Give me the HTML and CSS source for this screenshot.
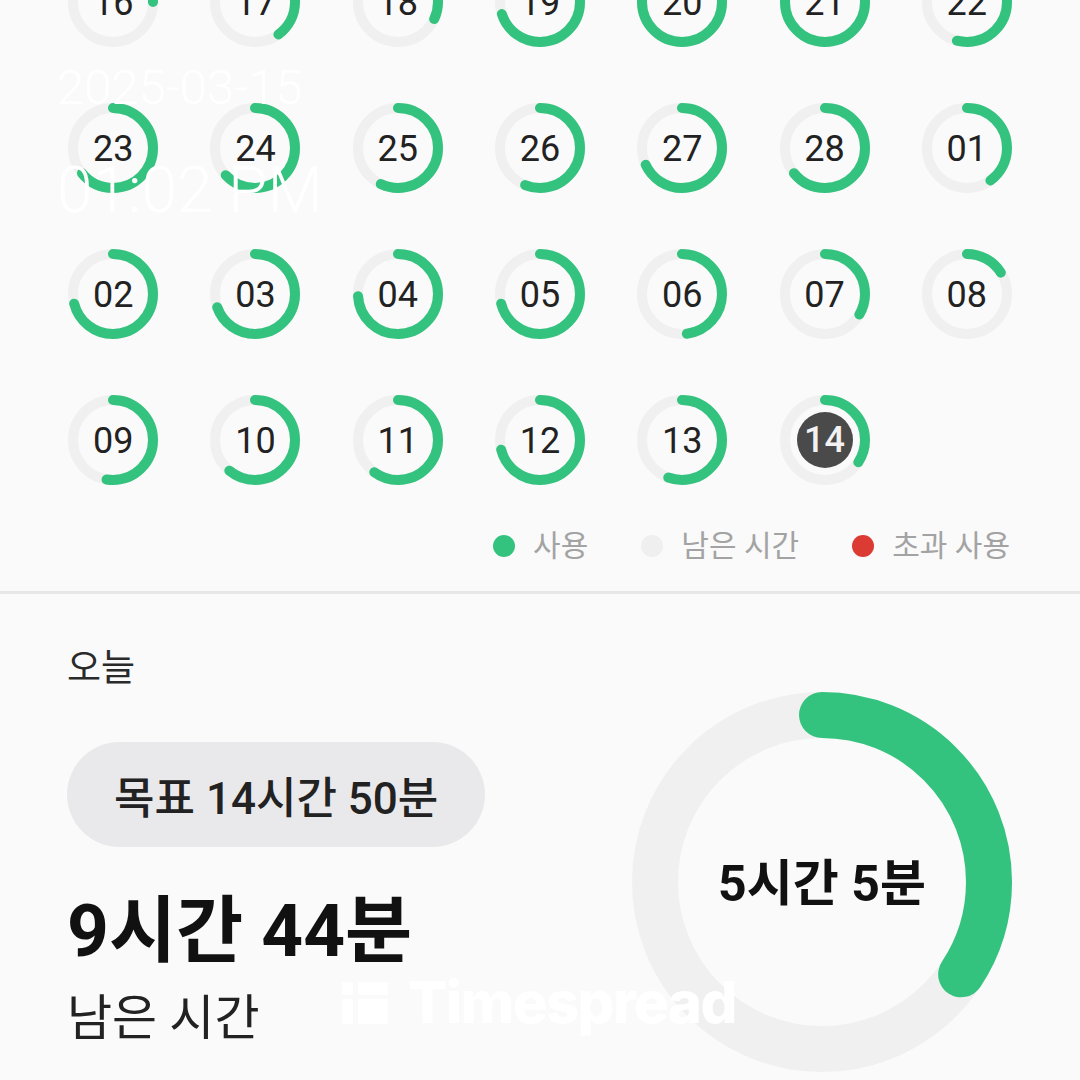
FILE: index.html
```html
<!DOCTYPE html>
<html lang="ko">
<head>
<meta charset="utf-8">
<title>Timespread</title>
<link rel="stylesheet" href="styles.css">
</head>
<body>
<main class="screen">
  <section class="calendar">
    <div class="day"><svg class="ring" viewBox="0 0 90 90"><circle class="track" cx="45" cy="45" r="40"/><circle class="used" cx="45" cy="45" r="40" stroke-dasharray="62.8 1000"/></svg><span class="num">16</span></div>
    <div class="day"><svg class="ring" viewBox="0 0 90 90"><circle class="track" cx="45" cy="45" r="40"/><circle class="used" cx="45" cy="45" r="40" stroke-dasharray="100.5 1000"/></svg><span class="num">17</span></div>
    <div class="day"><svg class="ring" viewBox="0 0 90 90"><circle class="track" cx="45" cy="45" r="40"/><circle class="used" cx="45" cy="45" r="40" stroke-dasharray="80.4 1000"/></svg><span class="num">18</span></div>
    <div class="day"><svg class="ring" viewBox="0 0 90 90"><circle class="track" cx="45" cy="45" r="40"/><circle class="used" cx="45" cy="45" r="40" stroke-dasharray="175.9 1000"/></svg><span class="num">19</span></div>
    <div class="day"><svg class="ring" viewBox="0 0 90 90"><circle class="track" cx="45" cy="45" r="40"/><circle class="used" cx="45" cy="45" r="40" stroke-dasharray="221.2 1000"/></svg><span class="num">20</span></div>
    <div class="day"><svg class="ring" viewBox="0 0 90 90"><circle class="track" cx="45" cy="45" r="40"/><circle class="used" cx="45" cy="45" r="40" stroke-dasharray="221.2 1000"/></svg><span class="num">21</span></div>
    <div class="day"><svg class="ring" viewBox="0 0 90 90"><circle class="track" cx="45" cy="45" r="40"/><circle class="used" cx="45" cy="45" r="40" stroke-dasharray="135.7 1000"/></svg><span class="num">22</span></div>

    <div class="day"><svg class="ring" viewBox="0 0 90 90"><circle class="track" cx="45" cy="45" r="40"/><circle class="used" cx="45" cy="45" r="40" stroke-dasharray="160.9 1000"/></svg><span class="num">23</span></div>
    <div class="day"><svg class="ring" viewBox="0 0 90 90"><circle class="track" cx="45" cy="45" r="40"/><circle class="used" cx="45" cy="45" r="40" stroke-dasharray="158.3 1000"/></svg><span class="num">24</span></div>
    <div class="day"><svg class="ring" viewBox="0 0 90 90"><circle class="track" cx="45" cy="45" r="40"/><circle class="used" cx="45" cy="45" r="40" stroke-dasharray="143.3 1000"/></svg><span class="num">25</span></div>
    <div class="day"><svg class="ring" viewBox="0 0 90 90"><circle class="track" cx="45" cy="45" r="40"/><circle class="used" cx="45" cy="45" r="40" stroke-dasharray="140.7 1000"/></svg><span class="num">26</span></div>
    <div class="day"><svg class="ring" viewBox="0 0 90 90"><circle class="track" cx="45" cy="45" r="40"/><circle class="used" cx="45" cy="45" r="40" stroke-dasharray="170.9 1000"/></svg><span class="num">27</span></div>
    <div class="day"><svg class="ring" viewBox="0 0 90 90"><circle class="track" cx="45" cy="45" r="40"/><circle class="used" cx="45" cy="45" r="40" stroke-dasharray="160.9 1000"/></svg><span class="num">28</span></div>
    <div class="day"><svg class="ring" viewBox="0 0 90 90"><circle class="track" cx="45" cy="45" r="40"/><circle class="used" cx="45" cy="45" r="40" stroke-dasharray="100.5 1000"/></svg><span class="num">01</span></div>

    <div class="day"><svg class="ring" viewBox="0 0 90 90"><circle class="track" cx="45" cy="45" r="40"/><circle class="used" cx="45" cy="45" r="40" stroke-dasharray="178.4 1000"/></svg><span class="num">02</span></div>
    <div class="day"><svg class="ring" viewBox="0 0 90 90"><circle class="track" cx="45" cy="45" r="40"/><circle class="used" cx="45" cy="45" r="40" stroke-dasharray="174.7 1000"/></svg><span class="num">03</span></div>
    <div class="day"><svg class="ring" viewBox="0 0 90 90"><circle class="track" cx="45" cy="45" r="40"/><circle class="used" cx="45" cy="45" r="40" stroke-dasharray="186.0 1000"/></svg><span class="num">04</span></div>
    <div class="day"><svg class="ring" viewBox="0 0 90 90"><circle class="track" cx="45" cy="45" r="40"/><circle class="used" cx="45" cy="45" r="40" stroke-dasharray="178.4 1000"/></svg><span class="num">05</span></div>
    <div class="day"><svg class="ring" viewBox="0 0 90 90"><circle class="track" cx="45" cy="45" r="40"/><circle class="used" cx="45" cy="45" r="40" stroke-dasharray="120.6 1000"/></svg><span class="num">06</span></div>
    <div class="day"><svg class="ring" viewBox="0 0 90 90"><circle class="track" cx="45" cy="45" r="40"/><circle class="used" cx="45" cy="45" r="40" stroke-dasharray="84.2 1000"/></svg><span class="num">07</span></div>
    <div class="day"><svg class="ring" viewBox="0 0 90 90"><circle class="track" cx="45" cy="45" r="40"/><circle class="used" cx="45" cy="45" r="40" stroke-dasharray="40.2 1000"/></svg><span class="num">08</span></div>

    <div class="day"><svg class="ring" viewBox="0 0 90 90"><circle class="track" cx="45" cy="45" r="40"/><circle class="used" cx="45" cy="45" r="40" stroke-dasharray="132.0 1000"/></svg><span class="num">09</span></div>
    <div class="day"><svg class="ring" viewBox="0 0 90 90"><circle class="track" cx="45" cy="45" r="40"/><circle class="used" cx="45" cy="45" r="40" stroke-dasharray="153.3 1000"/></svg><span class="num">10</span></div>
    <div class="day"><svg class="ring" viewBox="0 0 90 90"><circle class="track" cx="45" cy="45" r="40"/><circle class="used" cx="45" cy="45" r="40" stroke-dasharray="150.8 1000"/></svg><span class="num">11</span></div>
    <div class="day"><svg class="ring" viewBox="0 0 90 90"><circle class="track" cx="45" cy="45" r="40"/><circle class="used" cx="45" cy="45" r="40" stroke-dasharray="178.4 1000"/></svg><span class="num">12</span></div>
    <div class="day"><svg class="ring" viewBox="0 0 90 90"><circle class="track" cx="45" cy="45" r="40"/><circle class="used" cx="45" cy="45" r="40" stroke-dasharray="139.5 1000"/></svg><span class="num">13</span></div>
    <div class="day"><svg class="ring" viewBox="0 0 90 90"><circle class="track" cx="45" cy="45" r="40"/><circle class="used" cx="45" cy="45" r="40" stroke-dasharray="86.2 1000"/></svg><span class="num num-today">14</span></div>
  </section>

  <ul class="legend">
    <li class="legend-item"><span class="dot dot-used"></span>사용</li>
    <li class="legend-item"><span class="dot dot-left"></span>남은 시간</li>
    <li class="legend-item"><span class="dot dot-over"></span>초과 사용</li>
  </ul>

  <div class="divider"></div>

  <section class="today">
    <div class="today-info">
      <div class="today-label">오늘</div>
      <div class="goal-pill">목표 14시간 50분</div>
      <div class="remain-value">9시간 44분</div>
      <div class="remain-label">남은 시간</div>
    </div>
    <div class="big-ring">
      <svg class="big-ring-svg" viewBox="0 0 380 380">
        <circle class="big-track" cx="190" cy="190" r="167"/>
        <circle class="big-used" cx="190" cy="190" r="167" stroke-dasharray="360 2000"/>
      </svg>
      <span class="big-ring-text">5시간 5분</span>
    </div>
  </section>

  <div class="stamp-date">2025-03-15</div>
  <div class="stamp-time">01:02 PM</div>
  <div class="brand">
    <svg class="brand-logo" viewBox="0 0 46 44">
      <rect x="0" y="2" width="11" height="13" rx="2"/>
      <rect x="0" y="19" width="11" height="25" rx="2"/>
      <rect x="16" y="2" width="30" height="13" rx="2"/>
      <rect x="16" y="19" width="30" height="25" rx="2"/>
    </svg>
    <span class="brand-name">Timespread</span>
  </div>
</main>
</body>
</html>
```

FILE: styles.css
```css
* { box-sizing: border-box; }

html, body {
  margin: 0;
  padding: 0;
  background: #fafafa;
}

body {
  font-family: Roboto, "Noto Sans CJK KR", sans-serif;
  color: #222;
}

.screen {
  position: relative;
  width: 1080px;
  height: 1080px;
  overflow: hidden;
  background: #fafafa;
}

/* calendar grid */
.calendar {
  display: grid;
  grid-template-columns: repeat(7, 1fr);
  row-gap: 56px;
  padding: 0 42px;
  margin-top: -43px;
}

.day {
  display: grid;
  place-items: center;
  justify-self: center;
  width: 90px;
  height: 90px;
}

.day > * { grid-area: 1 / 1; }

.ring {
  width: 90px;
  height: 90px;
}

.track {
  fill: none;
  stroke: #f0f0f0;
  stroke-width: 10;
}

.used {
  fill: none;
  stroke: #34c37e;
  stroke-width: 10;
  stroke-linecap: round;
  transform: rotate(-90deg);
  transform-origin: 45px 45px;
}

.num {
  font-size: 36px;
  line-height: 40px;
  color: #222;
  padding-top: 2px;
}

.num-today {
  width: 56px;
  height: 56px;
  padding-top: 0;
  border-radius: 50%;
  background: #4a4a4a;
  color: #f2f2f2;
  font-weight: 500;
  display: flex;
  align-items: center;
  justify-content: center;
}

/* legend */
.legend {
  list-style: none;
  margin: 41px 0 0;
  padding: 0 70px 0 0;
  display: flex;
  justify-content: flex-end;
  gap: 53px;
  height: 40px;
  align-items: center;
}

.legend-item {
  display: flex;
  align-items: center;
  gap: 18px;
  font-size: 30px;
  line-height: 40px;
  color: #a3a3a3;
}

.dot {
  width: 22px;
  height: 22px;
  border-radius: 50%;
}

.dot-used { background: #34c37e; }
.dot-left { background: #efefef; }
.dot-over { background: #db3b33; }

.divider {
  margin-top: 25px;
  height: 3px;
  background: #e7e7e7;
}

/* today */
.today {
  display: flex;
  align-items: flex-start;
  padding: 55px 68px 0 67px;
}

.today-info {
  flex: 1;
  display: flex;
  flex-direction: column;
  align-items: flex-start;
}

.today-label {
  font-size: 37px;
  line-height: 40px;
  color: #2a2a2a;
}

.goal-pill {
  margin-top: 53px;
  height: 105px;
  padding: 0 47px;
  border-radius: 53px;
  background: #e9e9eb;
  display: flex;
  align-items: center;
  font-size: 44px;
  font-weight: 500;
  color: #222;
}

.remain-value {
  margin-top: 46px;
  font-size: 73px;
  line-height: 76px;
  font-weight: 700;
  color: #111;
}

.remain-label {
  margin-top: 24px;
  font-size: 49px;
  line-height: 52px;
  color: #222;
}

.big-ring {
  margin-top: 43px;
  width: 380px;
  height: 380px;
  display: grid;
  place-items: center;
}

.big-ring > * { grid-area: 1 / 1; }

.big-ring-svg {
  width: 380px;
  height: 380px;
}

.big-track {
  fill: none;
  stroke: #f0f0f0;
  stroke-width: 46;
}

.big-used {
  fill: none;
  stroke: #34c37e;
  stroke-width: 46;
  stroke-linecap: round;
  transform: rotate(-90deg);
  transform-origin: 190px 190px;
}

.big-ring-text {
  font-size: 50px;
  font-weight: 700;
  color: #111;
  line-height: 56px;
  padding-top: 4px;
}

/* photo stamp overlays */
.stamp-date {
  position: absolute;
  left: 57px;
  top: 64px;
  font-size: 49px;
  line-height: 48px;
  font-weight: 300;
  color: #ffffff;
}

.stamp-time {
  position: absolute;
  left: 57px;
  top: 160px;
  font-size: 64px;
  line-height: 62px;
  font-weight: 300;
  color: #ffffff;
}

.brand {
  position: absolute;
  left: 342px;
  top: 976px;
  display: flex;
  align-items: center;
  gap: 20px;
  color: #ffffff;
}

.brand-logo {
  width: 46px;
  height: 44px;
  fill: #ffffff;
}

.brand-name {
  font-family: Inter, "Open Sans", sans-serif;
  font-weight: 800;
  font-size: 58px;
  line-height: 52px;
  letter-spacing: -1.6px;
}
```
